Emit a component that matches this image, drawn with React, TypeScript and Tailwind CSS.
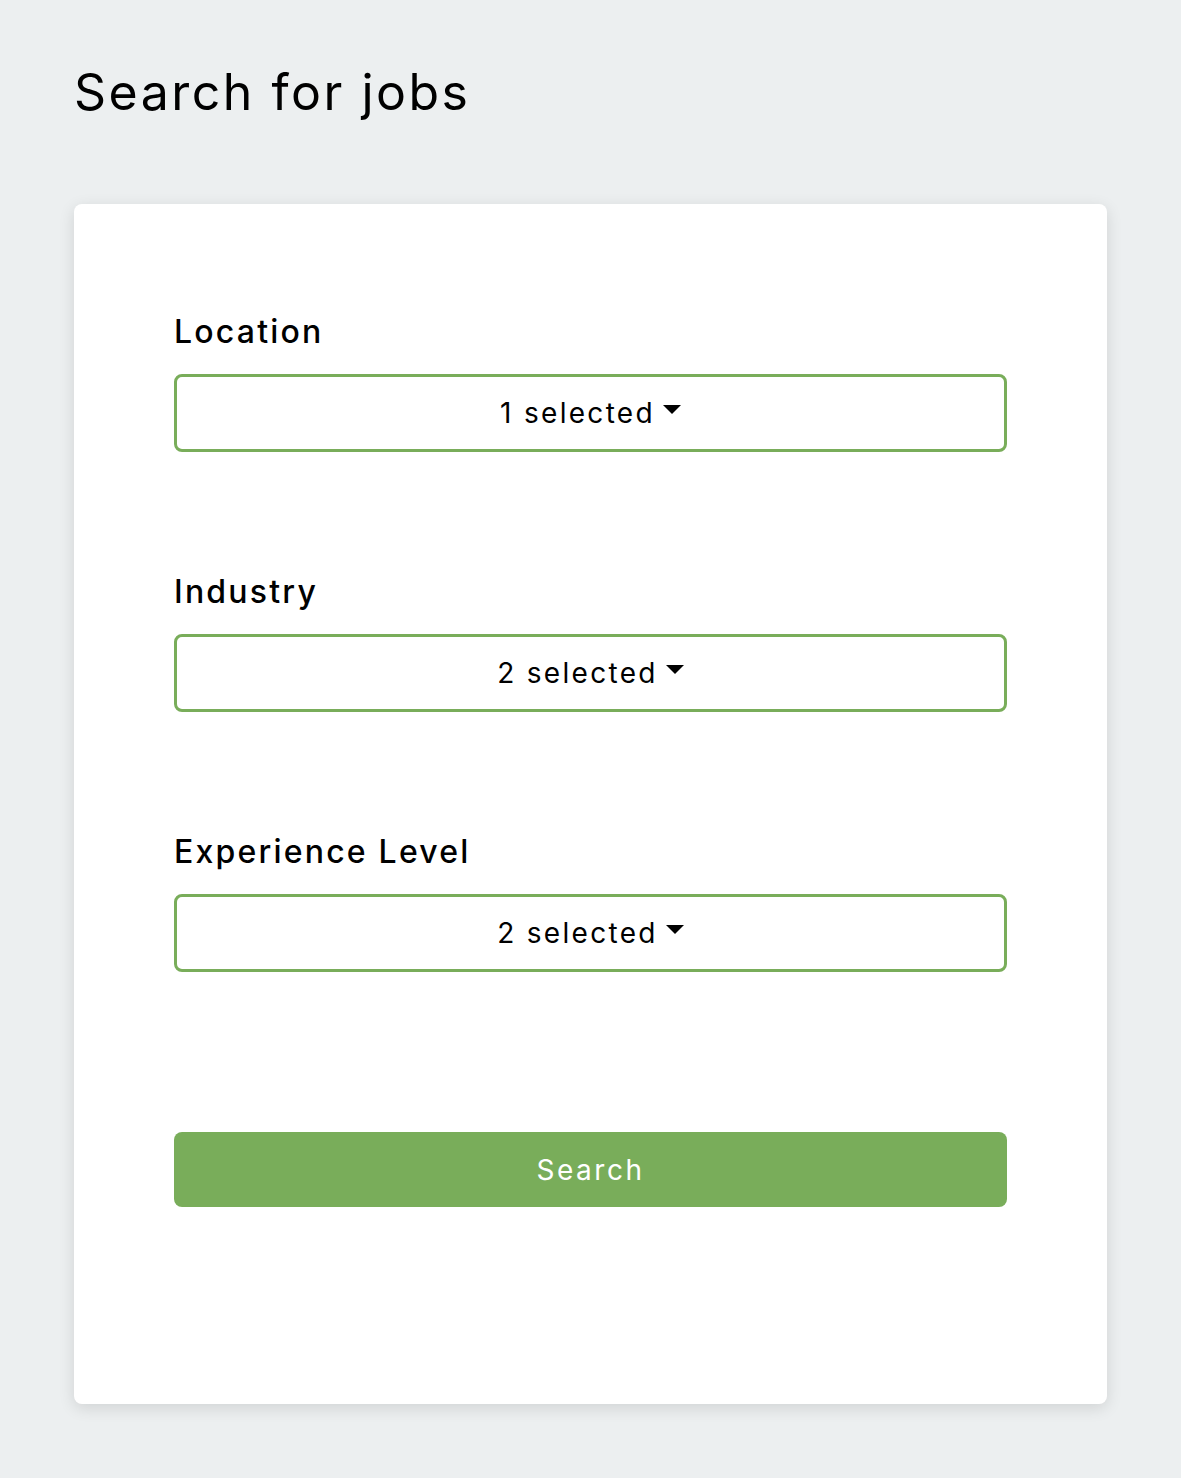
import React from "react";

type Filter = {
  label: string;
  value: string;
};

const filters: Filter[] = [
  { label: "Location", value: "1 selected" },
  { label: "Industry", value: "2 selected" },
  { label: "Experience Level", value: "2 selected" },
];

function Caret() {
  return (
    <svg width="18" height="9" viewBox="0 0 18 9" className="ml-2 mb-2">
      <path d="M0 0 L18 0 L9 9 Z" fill="#000" />
    </svg>
  );
}

export default function App() {
  return (
    <div
      className="min-h-screen bg-[#eceff0] px-[74px] pt-[56px] pb-[74px]"
      style={{ fontFamily: "Inter, 'Noto Sans', sans-serif" }}
    >
      <h1 className="text-[50px] leading-[72px] font-normal text-black tracking-[2.5px]">
        Search for jobs
      </h1>
      <div className="mt-[76px] bg-white rounded-lg shadow-[0_4px_16px_rgba(0,0,0,0.12)] px-[100px] pt-[108px] pb-[197px]">
        {filters.map((f) => (
          <div key={f.label} className="mb-[120px]">
            <label className="block text-[32px] leading-[40px] font-medium text-black tracking-[2.2px]">
              {f.label}
            </label>
            <button className="mt-[22px] w-full h-[78px] border-[3px] border-[#79ad5a] rounded-lg bg-white flex items-center justify-center text-[28px] text-black tracking-[2.3px]">
              {f.value}
              <Caret />
            </button>
          </div>
        ))}
        <button className="mt-[40px] w-full h-[75px] bg-[#79ad5a] rounded-lg text-white text-[28px] tracking-[2.5px]">
          Search
        </button>
      </div>
    </div>
  );
}
